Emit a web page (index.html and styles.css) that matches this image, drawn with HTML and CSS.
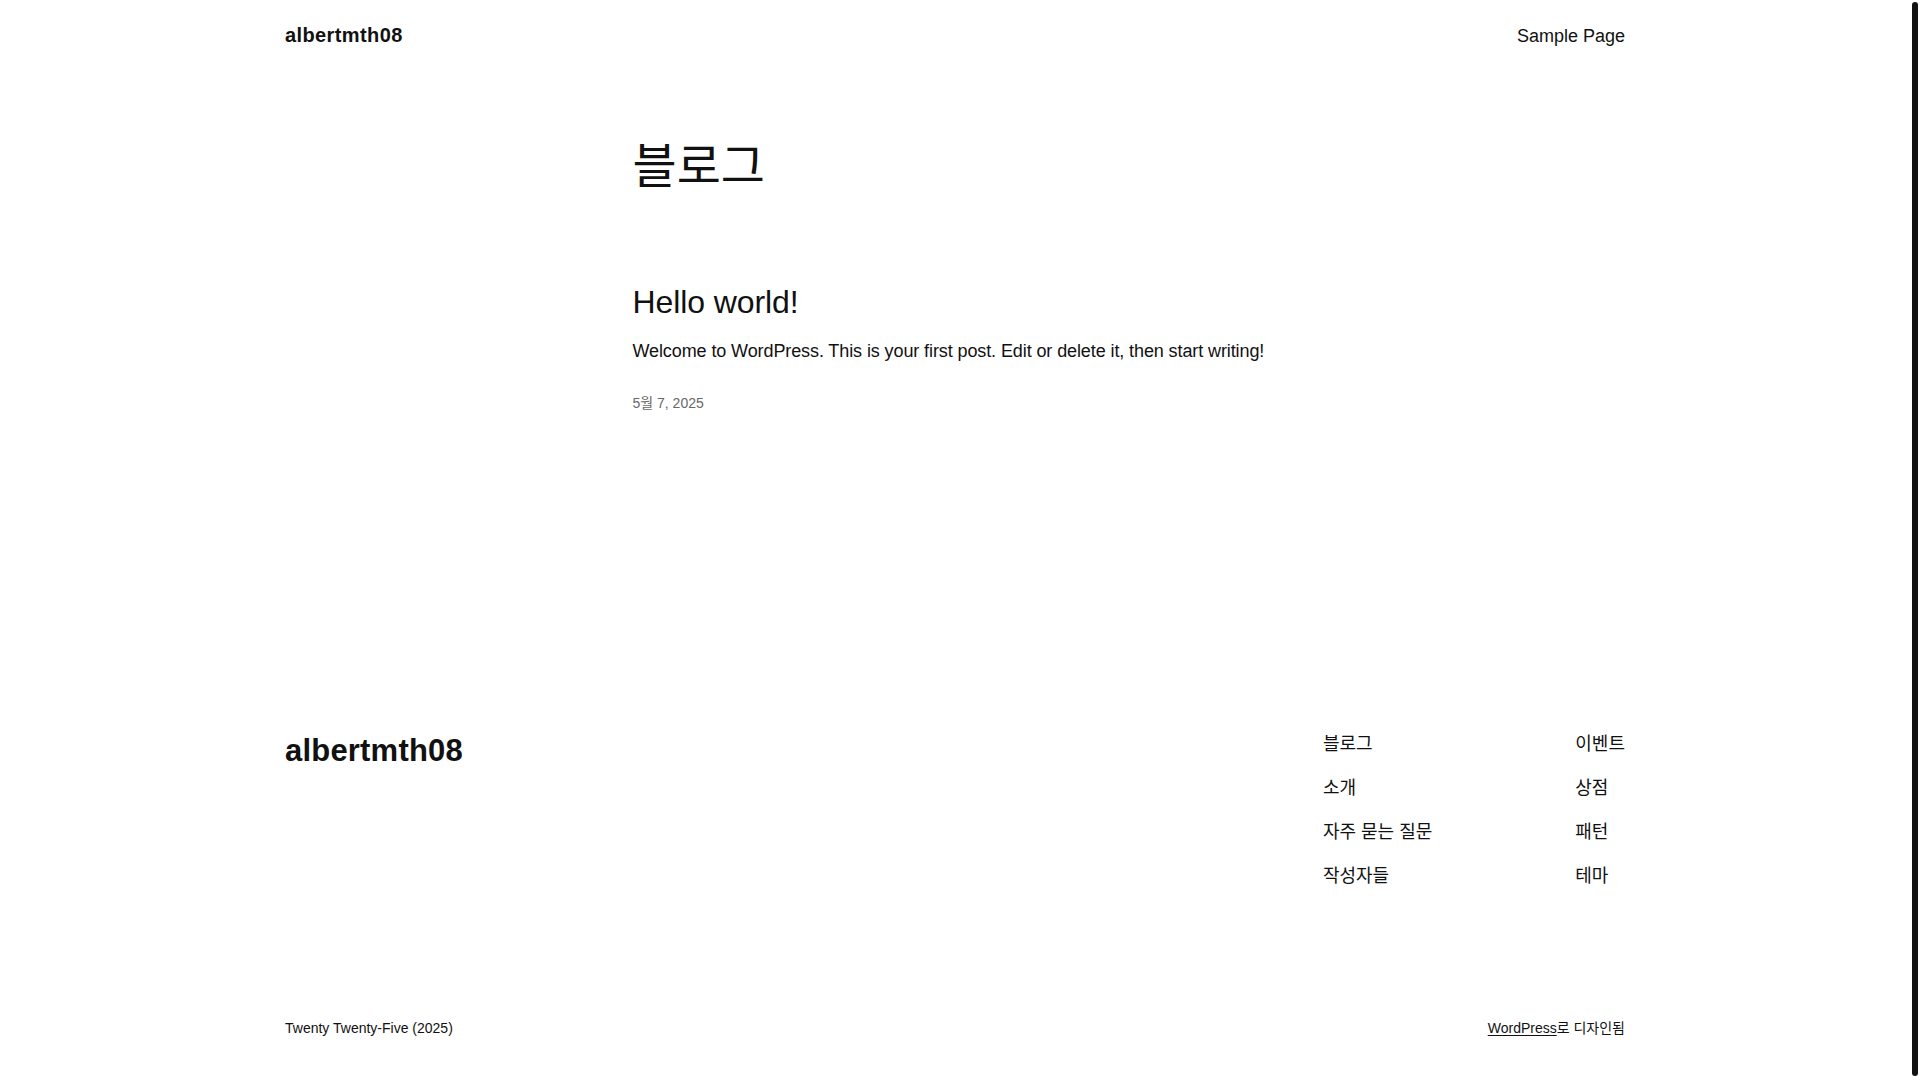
FILE: index.html
```html
<!DOCTYPE html>
<html lang="ko">
<head>
<meta charset="utf-8">
<title>블로그 – albertmth08</title>
<link rel="stylesheet" href="styles.css">
</head>
<body>
<div class="site">
  <header class="site-header wide">
    <a class="site-title" href="#">albertmth08</a>
    <nav class="header-nav"><a href="#">Sample Page</a></nav>
  </header>

  <main class="main">
    <div class="content">
      <h1 class="page-title">블로그</h1>
      <article class="post">
        <h2 class="post-title"><a href="#">Hello world!</a></h2>
        <p class="post-excerpt">Welcome to WordPress. This is your first post. Edit or delete it, then start writing!</p>
        <div class="post-date">5월 7, 2025</div>
      </article>
    </div>
  </main>

  <footer class="site-footer wide">
    <div class="footer-top">
      <a class="footer-title" href="#">albertmth08</a>
      <div class="footer-navs">
        <ul class="footer-nav">
          <li><a href="#">블로그</a></li>
          <li><a href="#">소개</a></li>
          <li><a href="#">자주 묻는 질문</a></li>
          <li><a href="#">작성자들</a></li>
        </ul>
        <ul class="footer-nav">
          <li><a href="#">이벤트</a></li>
          <li><a href="#">상점</a></li>
          <li><a href="#">패턴</a></li>
          <li><a href="#">테마</a></li>
        </ul>
      </div>
    </div>
    <div class="footer-bottom">
      <span>Twenty Twenty-Five (2025)</span>
      <span><a class="underline" href="#">WordPress</a>로 디자인됨</span>
    </div>
  </footer>
</div>
<div class="scroll-thumb"></div>
</body>
</html>
```

FILE: styles.css
```css
html, body {
  margin: 0;
  padding: 0;
  background: #ffffff;
  overflow: hidden;
}

body {
  font-family: "Liberation Sans", "Noto Sans CJK KR", sans-serif;
  color: #111111;
  font-size: 18px;
  line-height: 1.4;
}

a {
  color: inherit;
  text-decoration: none;
}

.site {
  width: 1910px;
}

.wide {
  width: 1340px;
  margin: 0 auto;
}

/* Header */
.site-header {
  display: flex;
  justify-content: space-between;
  align-items: baseline;
  padding: 21px 0 21px;
}

.site-title {
  font-size: 20px;
  font-weight: 700;
  line-height: 28px;
  letter-spacing: 0.4px;
}

.header-nav {
  font-size: 18px;
  line-height: 28px;
}

/* Main */
.main {
  margin-top: 67px;
}

.content {
  width: 645px;
  margin: 0 auto;
}

.page-title {
  margin: 0;
  font-size: 48px;
  font-weight: 400;
  line-height: 1.2;
}

.post {
  margin-top: 87px;
}

.post-title {
  margin: 0;
  font-size: 32px;
  font-weight: 400;
  line-height: 1.2;
  letter-spacing: -0.1px;
}

.post-excerpt {
  margin: 18px 0 0;
  font-size: 18px;
  line-height: 1.4;
  letter-spacing: -0.1px;
}

.post-date {
  margin-top: 30px;
  font-size: 14px;
  line-height: 1.4;
  color: #686868;
}

/* Footer */
.site-footer {
  margin-top: 318px;
}

.footer-top {
  display: flex;
  justify-content: space-between;
  align-items: flex-start;
}

.footer-title {
  font-size: 31px;
  font-weight: 700;
  line-height: 1.2;
  letter-spacing: 0.2px;
}

.footer-navs {
  display: flex;
  gap: 143px;
}

.footer-nav {
  list-style: none;
  margin: 0;
  padding: 0;
  display: flex;
  flex-direction: column;
  gap: 18.8px;
  font-size: 18px;
  line-height: 25.2px;
}

.footer-bottom {
  margin-top: 130px;
  display: flex;
  justify-content: space-between;
  font-size: 14px;
  line-height: 1.4;
}

.underline {
  text-decoration: underline;
  text-underline-offset: 2px;
}

.scroll-thumb {
  position: fixed;
  top: 2px;
  bottom: 4px;
  right: 2px;
  width: 6px;
  border-radius: 3px;
  background: #111111;
}
```
